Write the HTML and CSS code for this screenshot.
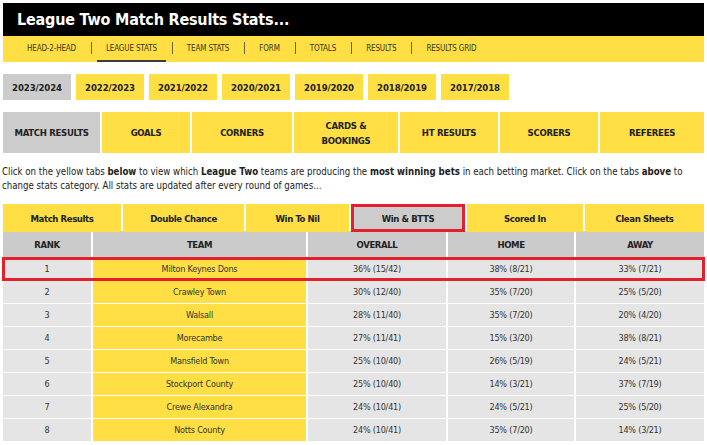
FILE: index.html
```html
<!DOCTYPE html>
<html lang="en">
<head>
<meta charset="utf-8">
<title>League Two Match Results Stats</title>
<link rel="stylesheet" href="styles.css">
</head>
<body>
<div class="page">
  <header class="title-bar"><h1 class="title">League Two Match Results Stats...</h1></header>
  <nav class="main-nav">
    <ul class="nav-list">
      <li class="nav-item"><a class="nav-link">HEAD-2-HEAD</a></li>
      <li class="nav-item"><a class="nav-link active">LEAGUE STATS</a></li>
      <li class="nav-item"><a class="nav-link">TEAM STATS</a></li>
      <li class="nav-item"><a class="nav-link">FORM</a></li>
      <li class="nav-item"><a class="nav-link">TOTALS</a></li>
      <li class="nav-item"><a class="nav-link">RESULTS</a></li>
      <li class="nav-item"><a class="nav-link">RESULTS GRID</a></li>
    </ul>
  </nav>

  <div class="seasons">
    <a class="season current">2023/2024</a>
    <a class="season">2022/2023</a>
    <a class="season">2021/2022</a>
    <a class="season">2020/2021</a>
    <a class="season">2019/2020</a>
    <a class="season">2018/2019</a>
    <a class="season">2017/2018</a>
  </div>

  <div class="categories">
    <a class="cat current">MATCH RESULTS</a>
    <a class="cat">GOALS</a>
    <a class="cat">CORNERS</a>
    <a class="cat">CARDS &amp;<br>BOOKINGS</a>
    <a class="cat">HT RESULTS</a>
    <a class="cat">SCORERS</a>
    <a class="cat">REFEREES</a>
  </div>

  <p class="intro">Click on the yellow tabs <b>below</b> to view which <b>League Two</b> teams are producing the <b>most winning bets</b> in each betting market. Click on the tabs <b>above</b> to<br>change stats category. All stats are updated after every round of games...</p>

  <div class="markets">
    <a class="market">Match Results</a>
    <a class="market">Double Chance</a>
    <a class="market">Win To Nil</a>
    <a class="market current">Win &amp; BTTS</a>
    <a class="market">Scored In</a>
    <a class="market">Clean Sheets</a>
  </div>

  <table class="stats">
    <colgroup>
      <col class="c-rank"><col class="c-team"><col class="c-overall"><col class="c-home"><col class="c-away">
    </colgroup>
    <thead>
      <tr><th>RANK</th><th>TEAM</th><th>OVERALL</th><th>HOME</th><th>AWAY</th></tr>
    </thead>
    <tbody>
      <tr class="highlight"><td>1</td><td class="team">Milton Keynes Dons</td><td>36% (15/42)</td><td>38% (8/21)</td><td>33% (7/21)</td></tr>
      <tr><td>2</td><td class="team">Crawley Town</td><td>30% (12/40)</td><td>35% (7/20)</td><td>25% (5/20)</td></tr>
      <tr><td>3</td><td class="team">Walsall</td><td>28% (11/40)</td><td>35% (7/20)</td><td>20% (4/20)</td></tr>
      <tr><td>4</td><td class="team">Morecambe</td><td>27% (11/41)</td><td>15% (3/20)</td><td>38% (8/21)</td></tr>
      <tr><td>5</td><td class="team">Mansfield Town</td><td>25% (10/40)</td><td>26% (5/19)</td><td>24% (5/21)</td></tr>
      <tr><td>6</td><td class="team">Stockport County</td><td>25% (10/40)</td><td>14% (3/21)</td><td>37% (7/19)</td></tr>
      <tr><td>7</td><td class="team">Crewe Alexandra</td><td>24% (10/41)</td><td>24% (5/21)</td><td>25% (5/20)</td></tr>
      <tr><td>8</td><td class="team">Notts County</td><td>24% (10/41)</td><td>35% (7/20)</td><td>14% (3/21)</td></tr>
    </tbody>
  </table>
</div>
</body>
</html>
```

FILE: styles.css
```css
* { box-sizing: border-box; }
html, body { margin: 0; padding: 0; background: #fff; }
body {
  font-family: "DejaVu Sans Condensed", "DejaVu Sans", Verdana, sans-serif;
  color: #222;
  font-size: 10px;
}
a { text-decoration: none; color: inherit; }
.page { padding: 3px 3px 0 3px; width: 707px; }

.title-bar {
  background: #000;
  height: 33px;
  display: flex;
  align-items: center;
  padding-left: 14px;
}
.title {
  margin: 0;
  color: #fff;
  font-size: 16px;
  font-weight: bold;
  letter-spacing: -0.2px;
}

.main-nav {
  background: #ffdf43;
  height: 26px;
  padding-left: 9px;
}
.nav-list {
  list-style: none;
  margin: 0;
  padding: 0;
  display: flex;
  align-items: stretch;
  height: 100%;
}
.nav-item {
  display: flex;
  align-items: center;
  padding: 0 6px;
  position: relative;
}
.nav-item + .nav-item::before {
  content: "";
  position: absolute;
  left: 0;
  top: 6px;
  height: 12px;
  width: 1px;
  background: #6e6220;
}
.nav-link {
  display: flex;
  align-items: center;
  height: 100%;
  padding: 1px 9px 0;
  font-size: 8px;
  letter-spacing: -0.15px;
  color: #3a3520;
  border-bottom: 2px solid transparent;
}
.nav-link.active { border-bottom-color: #3c3c3c; }

.seasons {
  display: flex;
  gap: 5px;
  margin-top: 12px;
}
.season {
  width: 68px;
  height: 26px;
  display: flex;
  align-items: center;
  justify-content: center;
  background: #ffdf43;
  font-weight: bold;
  font-size: 9.5px;
  letter-spacing: -0.1px;
  color: #222;
}
.season.current { background: #cccccc; }

.categories {
  display: grid;
  grid-template-columns: 97px 88px 100px 104px 98px 98px 104px;
  gap: 2px;
  margin-top: 12px;
}
.cat {
  height: 41px;
  display: flex;
  align-items: center;
  justify-content: center;
  text-align: center;
  background: #ffdf43;
  font-weight: bold;
  font-size: 9.5px;
  letter-spacing: -0.3px;
  line-height: 15px;
  color: #222;
}
.cat.current { background: #cccccc; }

.intro {
  margin: 12px 0 0 -1px;
  font-size: 9.6px;
  line-height: 14px;
  color: #222;
}

.markets {
  display: grid;
  grid-template-columns: 118px 121px 103px 114px 116px 119px;
  gap: 2px;
  margin-top: 11px;
}
.market {
  height: 28px;
  display: flex;
  align-items: center;
  justify-content: center;
  background: #ffdf43;
  font-weight: bold;
  font-size: 9.5px;
  letter-spacing: -0.4px;
  color: #222;
}
.market.current {
  background: #cccccc;
  box-shadow: inset 0 0 0 3px #e3202b;
}

.stats {
  width: 705px;
  margin: -2px 0 0 -2px;
  border-collapse: separate;
  border-spacing: 2px 1px;
  table-layout: fixed;
  color: #333;
}
.c-rank { width: 88px; }
.c-team { width: 213px; }
.c-overall { width: 138px; }
.c-home { width: 126px; }
.c-away { width: 128px; }
.stats th {
  background: #cbcbcb;
  height: 26px;
  font-size: 9.5px;
  letter-spacing: -0.4px;
  font-weight: bold;
  color: #222;
  text-align: center;
  padding: 0;
}
.stats td {
  background: #e5e5e5;
  height: 22px;
  text-align: center;
  font-size: 9px;
  letter-spacing: -0.2px;
  padding: 0;
}
.stats td.team { background: #ffdf43; }
.stats tr.highlight {
  outline: 3px solid #e3202b;
  outline-offset: -2px;
}
```
